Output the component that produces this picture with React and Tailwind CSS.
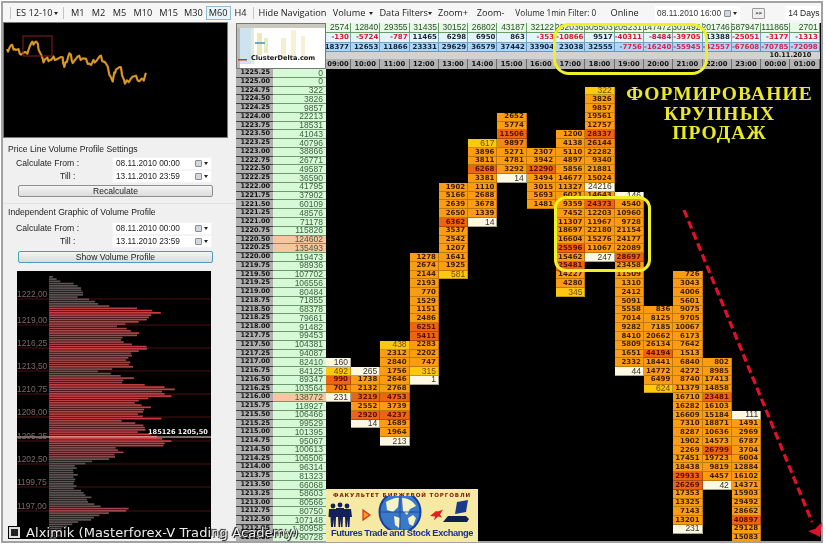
import React from "react";

const totals = [0,0,322,3826,9857,22213,18531,41043,40796,38866,26771,49587,36590,41795,37902,60109,48576,71178,115826,124602,135493,119473,98936,107702,106556,80484,71855,68378,79661,91482,99453,104381,94087,82410,84125,89347,103564,138772,118927,106466,99529,101395,95067,100613,106506,96314,81323,66068,58603,80566,80750,107148,80958,90728];
const peach = new Set([124602,135493,138772]);
const times = ["09:00","10:00","11:00","12:00","13:00","14:00","15:00","16:00","17:00","18:00","19:00","20:00","21:00","22:00","23:00","00:00","01:00"];
const r1 = [2574,12840,29355,31435,30152,26802,43187,32122,202036,305503,205231,147472,301492,201746,587947,111865,2701];
const r2 = [-130,-5724,-787,11465,6298,6950,863,-353,-10866,9517,-40311,-8484,-39705,13388,-25051,-3177,-1313];
const r3 = [18377,12653,11866,23331,29629,36579,37442,33904,23038,32555,-7756,-16240,-55945,-42557,-67608,-70785,-72098];

const columns = [
  [0,33,"160w 492y 990d 701m 231w"],
  [1,34,"265w 1738 2132 3219d 2552 2920d 14w"],
  [2,31,"438y 2312 2840 1756 2646 2768 4753d 3739 4237d 1689 1964 213w"],
  [3,21,"1278 2674 2144 2193 770 1529 1151 2486 6251d 5411d 2283 2202 747 315y 1w"],
  [4,13,"1902 5166 2639 2650 6362d 3537 2542 1207 1641 1925 581y"],
  [5,8,"617y 3896 3811 6268d 3381 1110 2688 3678 1339 14w"],
  [6,5,"2652 5774 11506d 9897m 5271 4781 3292 14w"],
  [7,9,"2307 3942 12290d 3494 3015 5693 1481"],
  [8,7,"1200 4138 5110 4897 5856 14677 11327 6021 9359 7452 11307 18697 16604 25596d 15462 25481d 14227 4280 345y"],
  [9,2,"322y 3826 9857 19561 12757 28337d 26144m 22282 9340 21881 15024 24216w 14643 24373d 12203 11967 22180 15276 11067 247w"],
  [10,14,"146w 4540 10960 9728 21154 24177 22089 28697d 23458 11509 1310 2412 5091 5558 7014 9282 8410 5809 1651 2332 44w"],
  [11,27,"836 8125 7185 20662 26134 44194d 18441 14772 6499 624y"],
  [12,23,"726 3043 4006 5601 9075 9705 10067 6173 7642 1513 6840 4272 8740 11379 16710 16282 16609 7310 8287 1902 2269 17451 18438 29933d 26269d 17353 13325 7143 13201 231w"],
  [13,33,"802 8985 17413 14858 23481d 16103 15184 18871 10636 14573 26799d 19723 9819 4457 42w"],
  [14,39,"111w 1491 2969 6787 3704 6004 12884 16102 14371 15903 29492 28662 40897d 29128 15083"],
];

const tier = {
  n: "bg-[#fb9c12] text-[#3d1c00] font-bold font-['DejaVu_Sans'] text-[7px] border-[#c07a08]",
  m: "bg-[#f78612] text-[#3d1400] font-bold font-['DejaVu_Sans'] text-[7px] border-[#c07a08]",
  d: "bg-[#ef6410] text-[#5c0f00] font-bold font-['DejaVu_Sans'] text-[7px] border-[#b04a06]",
  y: "bg-[#fdc80f] text-[#6f4a05] font-['Liberation_Sans'] text-[8.5px] border-[#c09a10]",
  w: "bg-[#fcf8e2] text-[#333333] font-['Liberation_Sans'] text-[8.5px] border-[#a8a490]",
};

const HEAD = 5;
const cells = columns.flatMap(([c, start, s]) =>
  s.split(" ").map((tok, i) => {
    const m = tok.match(/^(\d+)([a-z]?)$/);
    return { c, row: start + i, v: m[1], t: m[2] || "n" };
  })
);

function fmtPrice(i) {
  return (1225.25 - i * 0.25).toFixed(2);
}

const env = [[277,53],[282,66],[285,81],[289,81],[293,88],[297,80],[302,98],[306,107],[309,147],[311,153],[313,163],[317,150],[320,150],[323,133],[326,120],[332,137],[335,142],[339,120],[345,133],[348,160],[350,143],[354,133],[359,130],[367,133],[371,100],[374,113],[378,135],[382,120],[387,163],[388,182],[392,163],[396,175],[399,147],[402,133],[407,153],[412,143],[416,138],[418,175],[421,125],[426,148],[429,150],[432,140],[436,157],[441,173],[446,163],[448,118],[452,126],[455,117],[459,113],[462,93],[466,78],[471,75],[474,80],[479,75],[484,78],[489,77],[492,84],[497,93],[502,88],[507,107],[510,146],[512,113],[516,100],[519,97],[524,73],[531,63],[539,58]];
function endAt(y) {
  for (let i = 1; i < env.length; i++) {
    if (y <= env[i][0]) {
      const [a, b] = env[i - 1];
      const [c, d] = env[i];
      return b + ((d - b) * (y - a)) / (c - a);
    }
  }
  return 58;
}
const bars = [];
for (let y = 277, i = 0; y < 540; y += 2.25, i++) {
  const e = endAt(y) - ((i * 7) % 5) * 1.1;
  const len = Math.max(e - 49, 3);
  const t = Math.min(len / 100, 1);
  const mix = t < 0.4 ? 0 : (t - 0.4) / 0.6;
  const r = Math.round(92 + 106 * mix);
  const g = Math.round(84 - 22 * mix);
  const b = Math.round(84 - 18 * mix);
  bars.push({ y: y - 272, w: len, fill: `rgb(${r},${g},${b})` });
}
const axis = [["1222,00",295],["1219,00",321],["1216,25",344],["1213,50",367],["1210,75",390],["1208,00",413],["1205,25",437],["1202,50",460],["1199,75",483],["1197,00",507]];

const mini = [[18,150],[30,135],[45,145],[60,155],[75,160],[90,130],[105,120],[115,145],[125,180],[135,175],[150,175],[165,170],[185,175],[190,200],[205,155],[215,180],[235,170],[250,175],[270,190],[285,175],[300,170],[315,190],[335,240],[345,200],[360,205],[372,250],[395,225],[415,235],[425,240],[438,210]];
const miniPts = [];
for (let i = 0; i < mini.length - 1; i++) {
  for (let k = 0; k < 4; k++) {
    const x = (mini[i][0] + ((mini[i + 1][0] - mini[i][0]) * k) / 4) / 3 - 3;
    const y = (mini[i][1] + ((mini[i + 1][1] - mini[i][1]) * k) / 4) / 3 - 22;
    miniPts.push(`${x.toFixed(1)},${(y + (((i * 5 + k * 3) % 4) - 1.5) * 1.3).toFixed(1)}`);
  }
}

function Sep() {
  return <span className="block w-px h-[12px] bg-[#c4c4c4] shrink-0" />;
}
function Caret({ className = "" }) {
  return <span className={"w-0 h-0 border-x-[2.5px] border-x-transparent border-t-[3px] border-t-[#222] shrink-0 " + className} />;
}
function Calendar() {
  return (
    <span className="flex items-center gap-[2px] ml-auto mr-[3px]">
      <span className="w-[7px] h-[7px] rounded-[1px] bg-[#d4d8dc] border border-[#8a8f95]" />
      <Caret />
    </span>
  );
}
function DateBox({ value }) {
  return (
    <div className="flex items-center w-[100px] h-[13px] bg-white pl-[3px] text-[8.3px] font-['Liberation_Sans'] text-[#222] border border-[#f4f4f4]">
      <span>{value}</span>
      <Calendar />
    </div>
  );
}
function FormRows() {
  return (
    <div className="grid grid-cols-[96px_100px] ml-[13px] mt-[2px] text-[8.6px] font-['Liberation_Sans'] text-[#222]">
      <div className="flex items-center h-[13px]"><span>Calculate From :</span></div>
      <DateBox value="08.11.2010 00:00" />
      <div className="flex items-center h-[13px] pl-[44px]"><span>Till :</span></div>
      <DateBox value="13.11.2010 23:59" />
    </div>
  );
}

function Logo() {
  return (
    <div className="relative bg-white overflow-hidden [grid-row:1/6] [grid-column:1/3] border border-[#777]">
      <svg width="90" height="46" className="block">
        <rect x="0" y="0" width="90" height="4" fill="#c9c9c0" />
        <rect x="3" y="4" width="11" height="36" fill="#cfe3ee" />
        <rect x="14" y="4" width="3" height="36" fill="#dcefd8" />
        <rect x="0" y="4" width="3" height="40" fill="#b9b9b9" />
        <rect x="20" y="9" width="5" height="22" fill="#f2e7b4" />
        <rect x="27" y="14" width="4" height="15" fill="#e8edc0" />
        <rect x="18" y="18" width="10" height="2" fill="#6aa8c4" />
        <rect x="44" y="14" width="5" height="20" fill="#f5efce" />
        <rect x="54" y="6" width="5" height="28" fill="#f7f1d4" />
        <rect x="64" y="12" width="4" height="24" fill="#f7f1d4" />
        <rect x="1" y="35" width="9" height="1.5" fill="#c8323a" />
      </svg>
      <span className="absolute left-[14px] top-[30px] text-[6.6px] font-bold font-['DejaVu_Sans'] text-[#111] whitespace-nowrap">ClusterDelta.com</span>
    </div>
  );
}

function Table() {
  return (
    <div className="grid grid-cols-[37px_53px_25px_repeat(16,29.3px)] grid-rows-[10px_10px_9px_7px_10px_repeat(54,8.78px)] bg-black h-full">
      <Logo />
      {times.map((t, i) => (
        <div key={"a" + i} style={{ gridRow: 1, gridColumn: i + 3 }} className="flex items-center justify-end overflow-hidden pr-[1px] bg-[#e6fae6] border-r border-b border-[#6d9a6d] text-[8.5px] font-['Liberation_Sans'] text-[#2e4a2e]">{r1[i]}</div>
      ))}
      {times.map((t, i) => (
        <div key={"b" + i} style={{ gridRow: 2, gridColumn: i + 3 }} className={"flex items-center justify-end overflow-hidden pr-[1px] bg-[#e2f5ff] border-r border-b border-[#7aa4bc] text-[7px] font-bold font-['DejaVu_Sans'] " + (r2[i] < 0 ? "text-[#d8182e]" : "text-[#1c2430]")}>{r2[i]}</div>
      ))}
      {times.map((t, i) => (
        <div key={"c" + i} style={{ gridRow: 3, gridColumn: i + 3 }} className={"flex items-center justify-end overflow-hidden pr-[1px] bg-[#abd6f7] border-r border-b border-[#6a96ba] text-[7px] font-bold font-['DejaVu_Sans'] " + (r3[i] < 0 ? "text-[#d0284e]" : "text-[#10243c]")}>{r3[i]}</div>
      ))}
      <div className="bg-[#d2d2d2] [grid-row:4] [grid-column:3/18]" />
      <div className="flex items-center justify-center bg-[#d2d2d2] [grid-row:4] [grid-column:18/20] text-[6.6px] font-bold font-['DejaVu_Sans'] text-[#111]">10.11.2010</div>
      {times.map((t, i) => (
        <div key={"t" + i} style={{ gridRow: 5, gridColumn: i + 3 }} className="flex items-center justify-center overflow-hidden bg-[#b2b2b2] border-r border-[#6b6b6b] text-[6.8px] font-bold font-['DejaVu_Sans'] text-[#111]">{t}</div>
      ))}
      {totals.map((v, i) => (
        <React.Fragment key={"p" + i}>
          <div style={{ gridRow: i + HEAD + 1, gridColumn: 1 }} className="flex items-center justify-end pr-[3px] bg-[#b0b0b0] border-b border-[#3c3c3c] text-[6.5px] font-bold font-['DejaVu_Sans'] text-[#111] overflow-hidden">{fmtPrice(i)}</div>
          <div style={{ gridRow: i + HEAD + 1, gridColumn: 2 }} className={"flex items-center justify-end pr-[3px] border-b border-[#6f9a6f] text-[8.5px] font-['Liberation_Sans'] text-[#3f5c3f] overflow-hidden " + (peach.has(v) ? "bg-[#f7c6a0]" : "bg-[#d6fad6]")}>{v}</div>
        </React.Fragment>
      ))}
      {cells.map((x, i) => (
        <div key={"d" + i} style={{ gridRow: x.row + HEAD + 1, gridColumn: x.c + 3 }} className={"flex items-center justify-end overflow-hidden pr-[2px] border-b border-r " + tier[x.t]}>{x.v}</div>
      ))}
    </div>
  );
}

function Minimap() {
  return (
    <div className="w-[225px] h-[116px] bg-black border border-[#777] overflow-hidden">
      <svg width="225" height="116" className="block">
        <polyline points={miniPts.join(" ")} fill="none" stroke="#c98a1e" strokeWidth="2.2" strokeLinejoin="round" />
        <polyline points={miniPts.join(" ")} fill="none" stroke="#e8a838" strokeWidth="0.7" />
        <rect x="19" y="13" width="29" height="20" fill="none" stroke="#8c1c1c" strokeWidth="1" />
      </svg>
    </div>
  );
}

function Profile() {
  return (
    <div className="ml-[14px] mt-[8px] w-[194px] h-[268px] bg-black overflow-hidden">
      <svg width="194" height="268" className="block">
        {axis.map(([l, y]) => (
          <line key={l} x1="0" x2="194" y1={y - 272 + 5} y2={y - 272 + 5} stroke="#4a1212" strokeWidth="1" />
        ))}
        {bars.map((b, i) => (
          <rect key={i} x="32" y={b.y} width={b.w} height="1.7" fill={b.fill} />
        ))}
        <line x1="0" x2="194" y1="166" y2="166" stroke="#ecd2d2" strokeWidth="1.2" />
        {axis.map(([l, y]) => (
          <text key={l} x="0" y={y - 272 + 3} fontSize="8.4" fontFamily="Liberation Sans" fill="#7e6a6a">{l}</text>
        ))}
        <text x="131" y="163" fontSize="6.6" fontWeight="700" fontFamily="DejaVu Sans" fill="#f4f4f4">185126  1205,50</text>
      </svg>
    </div>
  );
}

function LeftPanel() {
  return (
    <div className="w-[233px] shrink-0 bg-[#f0f0f0] flex flex-col">
      <div className="-mt-px"><Minimap /></div>
      <div className="mt-[5px] ml-[5px] h-[12px] flex items-center text-[8.6px] font-['Liberation_Sans'] text-[#222]">Price Line Volume Profile Settings</div>
      <FormRows />
      <button className="ml-[15px] mt-[2px] w-[195px] h-[12px] rounded-[2px] border border-[#8e8e8e] bg-[linear-gradient(#f4f4f4,#dcdcdc)] text-[8.6px] font-['Liberation_Sans'] text-[#222] flex items-center justify-center">Recalculate</button>
      <div className="mt-[6px] h-px bg-[#e2e2e2]" />
      <div className="mt-[2px] ml-[5px] h-[12px] flex items-center text-[8.6px] font-['Liberation_Sans'] text-[#222]">Independent Graphic of Volume Profile</div>
      <div className="mt-[2px]"><FormRows /></div>
      <button className="ml-[15px] mt-[3px] w-[195px] h-[12px] rounded-[2px] border border-[#4c9cc0] bg-[linear-gradient(#f4f4f4,#dcdcdc)] text-[8.6px] font-['Liberation_Sans'] text-[#222] flex items-center justify-center">Show Volume Profile</button>
      <Profile />
    </div>
  );
}

function Toolbar() {
  return (
    <div className="h-[20px] shrink-0 flex items-center bg-[#f6f6f6] text-[9.2px] text-[#222] whitespace-nowrap">
      <span className="ml-[7px]"><Sep /></span>
      <span className="ml-[5px] w-[33px]">ES 12-10</span>
      <Caret className="ml-[5px]" />
      <span className="ml-[5px]"><Sep /></span>
      <span className="ml-[7px] w-[21px]">M1</span>
      <span className="w-[21px]">M2</span>
      <span className="w-[21px]">M5</span>
      <span className="w-[26px]">M10</span>
      <span className="w-[25px]">M15</span>
      <span className="w-[22px]">M30</span>
      <span className="w-[25px] h-[14px] flex items-center justify-center border border-[#8dbcd4] bg-[#eaf4f8]">M60</span>
      <span className="ml-[4px] w-[19px]">H4</span>
      <Sep />
      <span className="ml-[4px] w-[75px]">Hide Navigation</span>
      <span className="w-[37px]">Volume</span>
      <Caret />
      <span className="ml-[6px] w-[49px]">Data Filters</span>
      <Caret />
      <span className="ml-[6px] w-[39px]">Zoom+</span>
      <span className="w-[39px]">Zoom-</span>
      <span className="w-[96px] text-[8.2px]">Volume 1min Filter: 0</span>
      <span className="w-[45px]">Online</span>
      <span className="w-[86px] h-[14px] flex items-center pl-[2px] bg-white text-[#333] text-[8.3px] font-['Liberation_Sans']">08.11.2010 16:00<Calendar /></span>
      <span className="ml-[12px] w-[13px] h-[11px] border border-[#9a9a9a] rounded-[1px] bg-[#eeeeee] flex items-center justify-center text-[6px] font-bold">&gt;&gt;</span>
      <span className="ml-[20px] w-[36px] h-[14px] flex items-center pl-[3px] bg-white text-[8.5px] font-['Liberation_Sans']">14 Days</span>
    </div>
  );
}

function Banner() {
  return (
    <div className="absolute left-[326px] top-[489px] w-[152px] h-[53px] bg-[#f6e9a4] overflow-hidden">
      <div className="mt-[2px] text-center text-[5.6px] font-bold font-['DejaVu_Sans'] tracking-[0.85px] text-[#7a1c10] whitespace-nowrap">ФАКУЛЬТЕТ БИРЖЕВОЙ ТОРГОВЛИ</div>
      <svg width="152" height="34" className="absolute left-0 top-[7px]">
        <g fill="#14205a">
          <circle cx="7" cy="10" r="2.4" /><path d="M3 13h8l1 8h-2l-.5 10h-1.5l-.5-8-.5 8H5l-.5-10h-2z" />
          <circle cx="14" cy="9" r="2.4" /><path d="M10 12h8l1 8h-2l-.5 11h-1.5l-.5-8-.5 8h-1.5l-.5-11h-2z" />
          <circle cx="21" cy="10" r="2.4" /><path d="M17 13h8l1 8h-2l-.5 10H22l-.5-8-.5 8h-1.5l-.5-10h-2z" />
        </g>
        <path d="M37 14l7 5-7 5z" fill="#f09a20" stroke="#d03020" strokeWidth="1.2" />
        <circle cx="74" cy="16" r="20.5" fill="#3a78c8" stroke="#16409a" strokeWidth="2" />
        <path d="M60 6c5-3 11-5 13-4l-1 9-5 5-6-2zM76 2c6 0 11 3 14 8l-6 3-3 6-4-4zM68 20l6 2-1 10-4-3zM82 22l5-3 3 3-3 8-4-2z" fill="#f4f2c8" />
        <path d="M54 16h40M74 -4v40" stroke="#16409a" strokeWidth="0.8" />
        <path d="M110 15l-6 5 5 .5 -1 4 4-4 4 1-2-3 3-5-5 2z" fill="#e02020" />
        <path d="M131 6l11-2-2 12-11 2z" fill="#1a3a8a" />
        <path d="M122 20h18l3 3-2 3h-24z" fill="#10204c" />
      </svg>
      <div className="absolute left-0 right-0 bottom-[1px] text-center text-[9.3px] font-bold font-['Liberation_Sans'] tracking-[-0.4px] text-[#1a2f96] whitespace-nowrap">Futures Trade and Stock Exchange</div>
    </div>
  );
}

function Overlays() {
  return (
    <>
      <div className="absolute left-[553px] top-[23px] w-[155px] h-[52px] rounded-[16px] border-[3px] border-[#f0f028]" />
      <div className="absolute left-[554px] top-[196px] w-[97px] h-[76px] rounded-[12px] border-[3px] border-[#f0f028]" />
      <div className="absolute left-[612px] top-[84px] w-[215px] text-center font-['Liberation_Serif'] font-bold text-[19.5px] leading-[19.5px] tracking-[1.1px] text-[#e9e92a]">
        ФОРМИРОВАНИЕ<br />КРУПНЫХ<br />ПРОДАЖ
      </div>
      <svg className="absolute left-[676px] top-[204px]" width="149" height="342">
        <line x1="8" y1="6" x2="136" y2="318" stroke="#e0102a" strokeWidth="3.2" strokeDasharray="8 4" />
        <path d="M144 333L132 327L139 325L146 318Z" fill="#e0102a" />
      </svg>
      <Banner />
      <div className="absolute left-[9px] top-[523px] flex items-center gap-[6px] text-[13px] font-['DejaVu_Sans'] tracking-[0.1px] text-[#ececec] [text-shadow:1px_1px_1px_#000,-1px_-1px_1px_#000] whitespace-nowrap">
        <span className="w-[11px] h-[11px] border-2 border-[#e0e0e0] outline outline-1 outline-black bg-[#222]" />
        <span>Alximik (Masterforex-V Trading Academy)</span>
      </div>
    </>
  );
}

export default function App() {
  return (
    <div className="relative w-[825px] h-[546px] bg-white overflow-hidden font-['Open_Sans',sans-serif] blur-[0.5px]">
      <div className="ml-[1px] mt-[1px] w-[822px] h-[542px] border-2 border-[#a2a2a2] flex flex-col overflow-hidden">
        <Toolbar />
        <div className="flex flex-1 min-h-0">
          <LeftPanel />
          <div className="flex-1 min-w-0 overflow-hidden bg-black"><Table /></div>
        </div>
      </div>
      <Overlays />
    </div>
  );
}
